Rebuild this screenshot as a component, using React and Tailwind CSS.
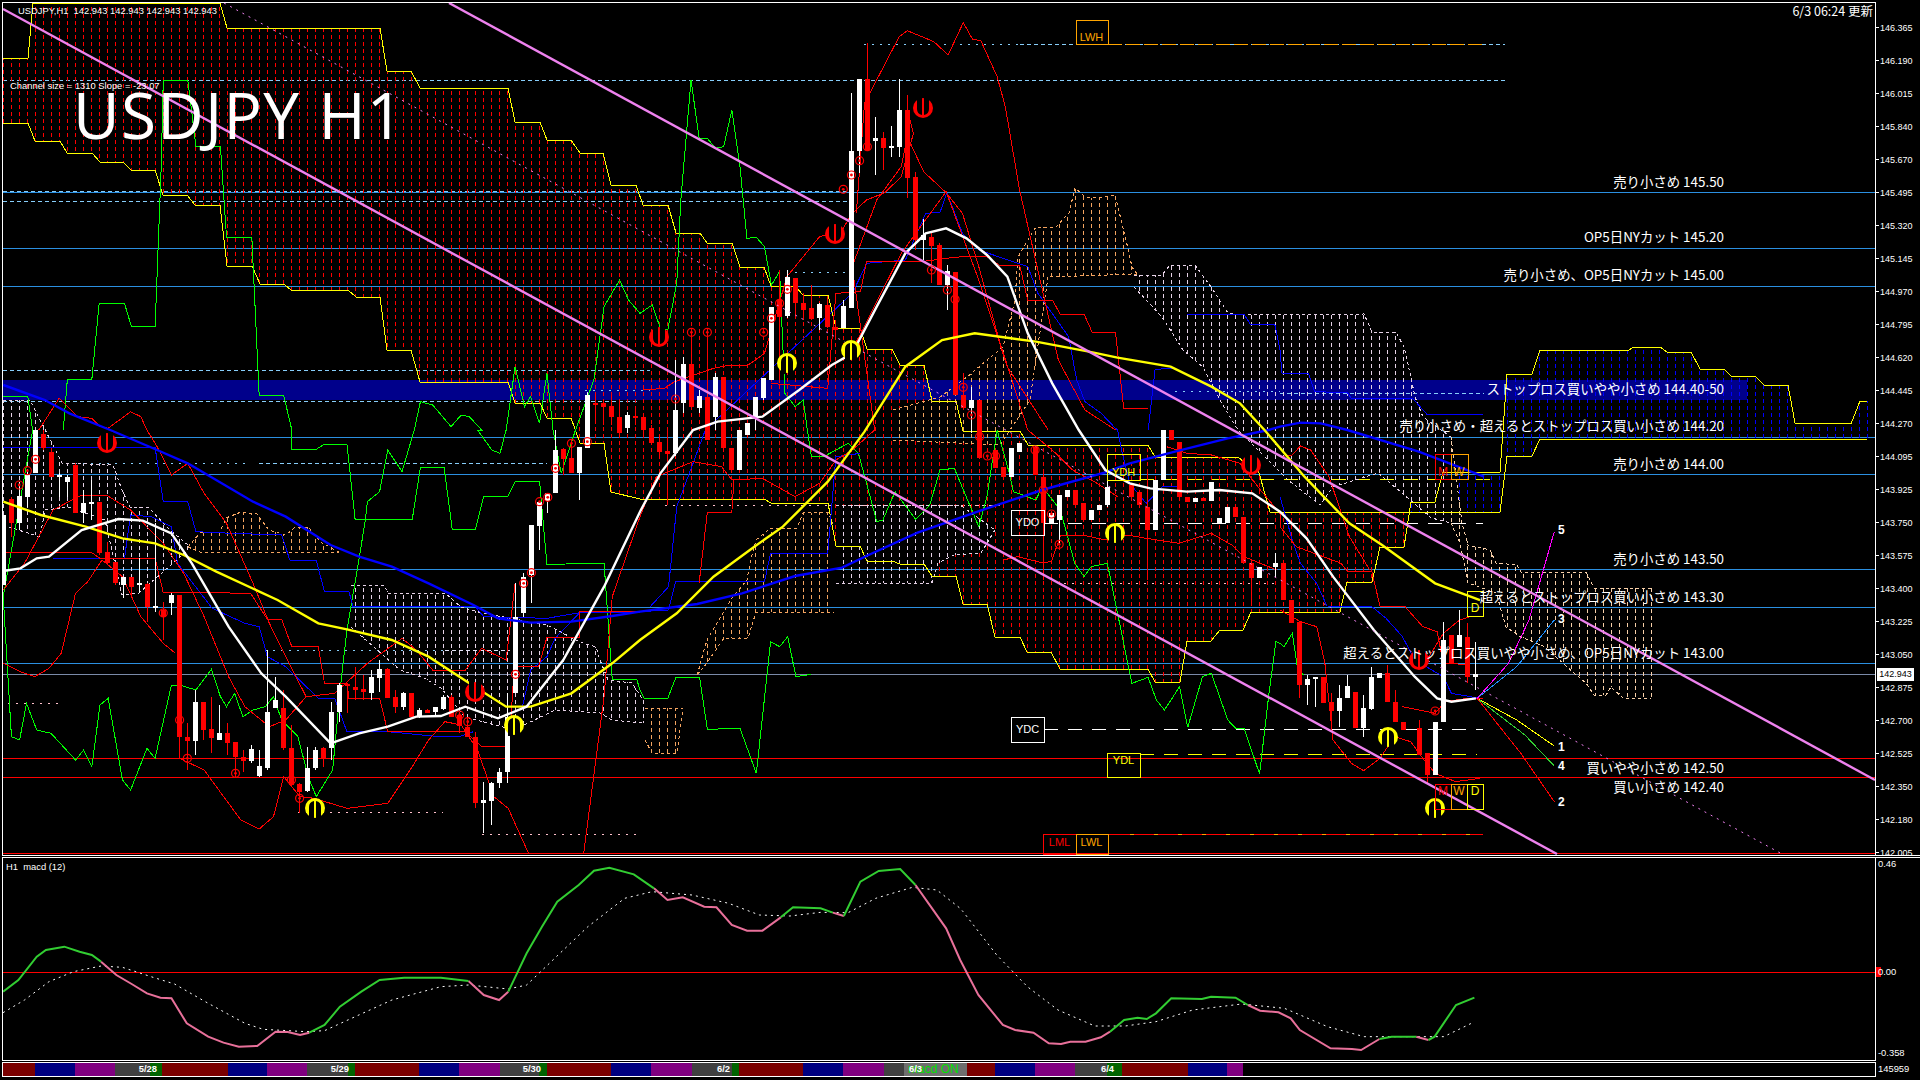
import React from "react";

// crop readings -> page pixels
const at = (ox, oy, sx, flat) => {
  const out = [];
  for (let i = 0; i < flat.length; i += 2) out.push([ox + flat[i] / sx, oy + flat[i + 1] / 3]);
  return out;
};
const a1 = (f) => at(0, 0, 2.45, f);
const a2 = (f) => at(1280, 0, 2.45, f);
const a3 = (f) => at(1280, 430, 2.45, f);
const a6 = (f) => at(640, 0, 2.45, f);
const a7 = (f) => at(640, 430, 2.45, f);
const a8 = (f) => at(0, 430, 2.45, f);
const m4 = (f) => at(0, 840, 1.633, f);
const m5 = (f) => at(960, 840, 1.633, f);
const pts = (list) => list.map((p) => p.join(",")).join(" ");

const interp = (poly, x) => {
  for (let i = 0; i < poly.length - 1; i++) {
    const [x0, y0] = poly[i];
    const [x1, y1] = poly[i + 1];
    if (x >= x0 && x <= x1) return x1 === x0 ? y0 : y0 + ((y1 - y0) * (x - x0)) / (x1 - x0);
  }
  return null;
};

const cloudTop = [[3,58],[28,58],[33,3],[220,3],[227,28],[380,28],[387,71],[411,71],[420,88],[508,88],[515,122],[540,122],[547,140],[571,140],[580,153],[603,153],[611,185],[636,185],[643,205],[668,205],[676,233],[700,233],[707,243],[732,243],[740,267],[764,267],[771,286],[795,286],[803,295],[828,295],[836,328],[860,328],[867,349],[892,349],[900,365],[924,365],[932,401],[956,401],[963,431],[1020,431],[1028,445],[1148,445],[1155,457],[1238,457],[1244,462],[1256,462],[1270,512],[1500,512],[1507,456],[1532,456],[1540,439],[1867,439]];
const cloudBottom = [[3,123],[28,123],[35,141],[60,141],[67,153],[92,153],[100,162],[123,162],[131,170],[155,170],[163,195],[187,195],[195,205],[220,205],[227,266],[252,266],[260,284],[284,284],[291,290],[348,290],[356,297],[380,297],[387,350],[411,350],[420,382],[508,382],[515,403],[540,403],[547,418],[571,418],[580,443],[604,443],[611,492],[640,499],[764,499],[771,503],[828,503],[836,546],[860,546],[867,561],[892,561],[900,564],[924,564],[932,576],[956,576],[963,604],[987,604],[995,637],[1020,637],[1027,652],[1051,652],[1060,669],[1148,669],[1155,682],[1180,682],[1187,641],[1211,641],[1220,630],[1243,630],[1251,612],[1340,612],[1347,582],[1372,582],[1380,547],[1404,547],[1411,502],[1435,502],[1443,472],[1500,472],[1507,374],[1532,374],[1540,350],[1629,350],[1634,347],[1660,347],[1667,352],[1691,352],[1700,369],[1724,369],[1731,376],[1755,376],[1764,385],[1788,385],[1795,423],[1824,423],[1851,424],[1860,401],[1867,401]];

// top edge, bottom edge, colour of every hatched stretch of the cloud
const hatches = [
  { top: cloudTop.filter((p) => p[0] <= 1500), bottom: cloudBottom.filter((p) => p[0] <= 1500), color: "#ff0000" },
  { top: [[1411,502],[1435,502],[1443,472],[1500,472]], bottom: [[1411,512],[1500,512]], color: "#0000ff" },
  { top: [[1507,374],[1532,374],[1540,350],[1629,350],[1634,347],[1660,347],[1667,352],[1691,352],[1700,369],[1724,369],[1731,376],[1755,376],[1764,385],[1788,385],[1795,423],[1824,423],[1851,424],[1860,401],[1867,401]], bottom: [[1507,456],[1532,456],[1540,439],[1867,439]], color: "#0000ff" },
  { top: [[3,400],[30,400],[62,463],[113,465],[122,490],[130,507],[148,507],[170,530],[188,545]], bottom: [[3,525],[40,537],[45,510],[68,507],[105,520],[122,595],[139,593],[188,550]], color: "#e6d2e6", edge: true },
  { top: [[188,547],[200,533],[220,532],[226,518],[241,512],[257,514],[269,530],[286,535],[294,528],[308,527],[322,543],[339,552]], bottom: [[188,547],[200,552],[339,552]], color: "#f4a460", edge: true },
  { top: [[351,585],[384,585],[388,593],[445,593],[461,607],[482,613],[547,625],[580,642],[596,647],[600,660],[608,680],[632,683],[643,700]], bottom: [[351,627],[400,670],[424,678],[441,688],[465,717],[514,730],[555,710],[600,713],[612,720],[643,723]], color: "#e6d2e6", edge: true },
  { top: [[645,708],[683,708]], bottom: [[645,740],[652,753],[677,753],[683,708]], color: "#f4a460", edge: true },
  { top: [[697,675],[707,640],[732,598],[747,580],[750,563],[756,540],[771,528],[797,528],[803,513],[828,512],[834,527]], bottom: [[697,675],[707,663],[724,638],[748,638],[756,612],[834,612]], color: "#f4a460", edge: true },
  { top: [[836,505],[960,505],[995,530]], bottom: [[836,583],[932,583],[938,563],[954,555],[981,553],[995,530]], color: "#e6d2e6", edge: true },
  { top: [[893,410],[940,397],[967,377],[987,360],[1003,347],[1015,300],[1018,257],[1032,233],[1036,227],[1056,227],[1069,213],[1075,188],[1085,197],[1097,198],[1105,197],[1115,195],[1126,240],[1132,267],[1138,275]], bottom: [[893,440],[1000,445],[1030,400],[1048,277],[1138,274]], color: "#f4a460", edge: true },
  { top: [[1134,275],[1162,275],[1170,265],[1195,265],[1211,287],[1228,313],[1244,315],[1364,314],[1372,332],[1396,332],[1404,347],[1410,373],[1415,397],[1423,417],[1451,437]], bottom: [[1134,287],[1162,317],[1183,350],[1203,367],[1220,400],[1238,430],[1288,480],[1320,505],[1333,487],[1378,473],[1402,493],[1431,518],[1451,523]], color: "#e6d2e6", edge: true },
  { top: [[1451,437],[1462,523],[1468,545],[1490,550],[1496,563],[1517,565],[1521,572],[1586,572],[1594,588],[1651,588]], bottom: [[1451,523],[1460,543],[1468,583],[1496,593],[1506,627],[1521,637],[1545,647],[1574,673],[1586,683],[1594,695],[1606,695],[1611,687],[1623,698],[1651,698]], color: "#f7cfa8", edge: true },
];

const hatchLines = [];
hatches.forEach((h, i) => {
  for (let x = 3; x < 1870; x += 8) {
    const t = interp(h.top, x);
    const b = interp(h.bottom, x);
    if (t !== null && b !== null && b > t) hatchLines.push({ key: `${i}-${x}`, x, t, b, color: h.color });
  }
});

const thin = [
  // green
  { c: "#00ff00", p: a1([155,1290,165,1138,225,1138,243,910,305,910,322,980,380,980,395,500,400,240,460,240,480,438,540,438,555,712,617,712,635,1186,695,1186,715,1290]).concat(a8([715,58,775,58,795,42,850,42,870,268,1010,268,1030,112,1088,112,1108,298,1165,298,1185,198,1245,198,1262,155,1322,155,1340,403,1480,400,1500,748,1560,748,1568,780]), a7([10,805,68,805,88,742,146,742,165,898,245,895,285,1030,320,635,342,650,362,620,382,740,420,733])) },
  { c: "#00ff00", p: a1([8,1190,68,1190,80,1290]).concat(a8([8,500,28,920,48,930,65,820,90,900,125,910,185,990,205,960,225,1010,245,825,265,805,300,1050,320,1080,360,955,380,985,420,765,440,765,480,780,518,718,540,800,555,830,575,790,595,860,620,840,650,830,670,800,690,870,730,920,755,1040,775,1100,815,1020,835,760,850,600,880,385,895,270,900,215,930,185,950,60,985,125,1015,0]), a1([1030,1205,1060,1215,1105,1280,1130,1245,1150,1250,1180,1290]), a8([1170,0,1205,60,1225,70,1240,0]), a1([1262,1100,1285,1220,1300,1190,1322,1270,1340,1120,1355,1290]), a8([1355,0,1375,130,1410,0]), a1([1455,1140,1480,920,1518,840,1540,900,1568,940]), a6([30,915,50,985,68,990,90,850,100,600,125,240,145,415,165,415,185,445,205,440,225,330,245,500,262,715,285,712,305,740,322,855,342,815,355,1180,380,1220,400,1200,410,1290]), a7([420,80,450,80,510,40,535,70,555,160,580,275,595,270,625,185,675,268,710,225,735,120,770,115,830,290,850,200,875,0,905,130,915,185,970,210,985,170,1030,240,1065,400,1088,440,1105,410,1145,400,1205,760,1245,742,1265,810,1285,840,1322,770,1342,892,1378,740,1400,730,1440,870,1460,895,1480,895,1518,1032,1540,800,1558,635,1568,640]), a3([10,650,30,610,45,730,60,733])) },
  // blue
  { c: "#0000ff", p: a8([8,52,380,52,400,215,460,215,480,305,570,310,690,315,710,390,775,392,795,485,855,485,865,530,1165,530,1185,560,1340,565,1420,548,1568,548]) },
  { c: "#0000ff", p: a8([130,385,245,385]) },
  { c: "#0000ff", p: a8([305,385,320,255,370,260,420,290,435,400,520,535,600,580,635,590,655,680,700,710,780,805,820,805,850,905,950,905,1060,918,1130,918,1160,905]) },
  { c: "#0000ff", p: a8([1280,830,1300,720,1340,680,1360,625,1420,548]) },
  { c: "#0000ff", p: a7([25,530,70,470,90,230,130,100,160,0]).concat(a6([520,880,540,830,555,790,650,780,700,640,735,637,752,578,790,700,830,750,950,800,975,880,1050,1010,1070,1140,1090,1205,1130,1240,1165,1285]), a7([1170,0,1180,60,1200,160,1240,220,1280,170,1320,170])) },
  { c: "#0000ff", p: a7([0,545,70,540,87,455,305,455,320,370,460,370,480,80,540,70]) },
  { c: "#0000ff", p: a6([1245,1290,1262,1108,1305,1105]) },
  { c: "#0000ff", p: a6([1340,945,1480,943,1495,972,1555,972,1568,1050]).concat(a2([5,1120,70,1122,85,1175,165,1178,175,1195,325,1195,360,1243,497,1243])) },
  { c: "#0000ff", p: a3([0,200,30,330,50,400,90,460,115,528,225,530,260,565,300,620,330,690,400,740,420,790,490,805]) },
  // red
  { c: "#ff0000", p: a1([95,1290,145,1195,190,1250,225,1255,245,1280,265,1285,320,1235,345,1250,360,1290]).concat(a8([385,50,420,135,460,100,500,190,555,280,620,460,660,580,700,680,750,800])) },
  { c: "#ff0000", p: a8([8,700,50,725,85,740,120,715,150,670,185,490,215,455,250,390,300,440,345,560,400,640,430,670]) },
  { c: "#ff0000", p: a8([8,480,60,400,130,240,200,195,260,195,320,240,400,340,450,430,500,560,560,740,600,830,660,890,700,870,750,800,820,790,900,700,985,625,1020,660,1060,720,1140,720,1180,655,1240,690,1262,460]) },
  { c: "#ff0000", p: a8([440,985,500,1020,590,1170,635,1197,670,1160,695,1040,735,1100,770,1105,850,1135,950,1120,1010,1010,1050,930,1090,875,1130,885,1170,960,1210,1100,1245,1135,1295,1270]) },
  { c: "#ff0000", p: a8([1430,1270,1480,800,1500,500,1568,260]).concat(a7([40,140,130,95,200,110,225,150,300,145,380,200,440,160,480,90,520,60,575,0]), a6([520,800,580,600,640,500,655,410,695,515,750,578,790,640,830,800,880,1020,950,1290]), a7([950,0,1010,60,1060,120,1120,160,1170,200])) },
  { c: "#ff0000", p: a8([8,368,225,368,245,385,380,385,400,488,545,488,615,492,655,568,690,568,715,650,780,650,795,760,850,760,855,805,930,805,950,905,1140,905,1180,950,1240,950,1245,1000,1260,708,1320,708,1340,622,1420,622,1420,545,1560,545]) },
  { c: "#ff0000", p: a6([8,1170,60,1165,85,1145,180,1105,220,1095,265,1095,305,1060,360,830,440,710,475,700]) },
  { c: "#ff0000", p: a6([480,720,520,640,555,600,600,578,640,530,670,400,655,330]) },
  { c: "#ff0000", p: a6([530,640,550,310,635,110,655,92,720,125,755,165,792,68,815,118,835,122,875,230,895,320,930,570,1010,1000,1025,1080,1090,1230,1165,1290]) },
  { c: "#ff0000", p: a6([320,1150,460,1165,480,880,540,875,555,785,690,785,750,775,790,770,850,770,880,795,930,795,950,900,1010,900,1030,943,1088,943,1108,997,1165,997,1185,1225,1245,1225]) },
  { c: "#ff0000", p: a6([520,1050,640,760,750,575,830,840,900,1100,1000,1290]) },
  { c: "#ff0000", p: a7([145,458,165,247,225,247,230,150]) },
  { c: "#ff0000", p: a7([890,390,925,380,985,398,1008,395,1030,318,1085,315,1140,330,1195,315,1240,325,1320,340,1400,310,1450,345,1480,380,1560,420]) },
  { c: "#ff0000", p: a7([1290,50,1340,70,1400,75,1470,100,1520,180,1568,250]).concat(a3([0,290,40,350,150,400,165,425,225,425,245,528,305,528,350,590,385,605,400,700,455,703])) },
  { c: "#ff0000", p: a3([0,80,30,75,50,48,75,60,120,140,170,320,220,420]) },
  { c: "#ff0000", p: a3([0,540,50,575,90,590,110,700,130,930,175,1000,205,1022,245,985,280,920,320,935,350,985,380,1030,430,1055,490,1045]) },
  { c: "#ff0000", p: a3([360,690,400,610,440,570,465,560]) },
  { c: "#ff0000", p: a3([300,830,380,850,405,815,460,805,497,805]) },
  // forecast waves
  { c: "#ffff00", p: a3([483,805,580,870,672,948]) },
  { c: "#32cd32", p: a3([483,805,600,915,672,1008]) },
  { c: "#ff0000", p: a3([483,805,590,970,672,1115]) },
  { c: "#1e90ff", p: a3([483,805,580,710,672,570]) },
  { c: "#ff00ff", p: a3([483,805,560,700,610,570,672,305]) },
];

const thick = [
  { c: "#0000ff", p: a1([8,1155,110,1200,170,1240,270,1290]).concat(a8([385,60,460,100,620,215,700,260,810,345,880,380,960,410,1050,460,1160,525,1220,565,1300,578,1400,575,1500,558,1568,545]), a7([140,522,250,490,380,438,495,413,560,375,680,308,850,235,985,180,1140,127,1200,100,1320,62,1440,25,1540,0]), a2([0,1280,50,1268,100,1270,165,1290]), a3([340,65,500,140])) },
  { c: "#ffff00", p: a8([8,215,100,255,210,290,300,325,380,340,450,375,530,425,680,510,780,580,850,598,960,630,1050,680,1150,760,1240,830,1300,830,1400,790,1500,700,1568,630]).concat(a7([90,550,180,440,280,350,350,290,460,155,550,5]), a6([650,1100,740,1020,820,1000,970,1025,1100,1055,1170,1073,1300,1100,1400,1160,1470,1210,1530,1290]), a3([60,140,170,280,250,345,380,460,490,510])) },
  { c: "#ffffff", p: a8([8,423,50,415,90,385,120,380,200,300,290,267,350,272,420,310,470,400,560,590,640,730,700,800,810,940,880,910,950,890,1020,860,1080,858,1140,830,1220,865,1290,830,1380,690,1480,470,1568,245]).concat(a7([50,130,130,0]), a6([190,1265,300,1250,390,1170,470,1095,520,1060,580,920,650,760,700,700,750,685,800,715,850,765,900,830,950,1000,1010,1150,1075,1290]), a7([1140,120,1200,160,1250,175,1340,185,1420,180,1500,190,1568,245]), a3([65,325,130,440,230,600,330,740,385,805,420,815,480,805])) },
];

// [crop x, wick top, wick bottom, body top, body bottom, colour] in crop units
const c8 = [[8,255,465,255,465,"w"],[28,200,320,208,280,"r"],[48,155,300,198,278,"w"],[67,125,230,135,200,"w"],[87,0,130,0,128,"w"],[107,0,60,12,55,"r"],[126,55,140,65,140,"r"],[146,130,200,135,140,"w"],[165,135,200,140,155,"w"],[185,100,250,105,250,"r"],[205,180,280,220,250,"w"],[224,150,270,215,222,"w"],[244,215,375,215,370,"r"],[263,335,405,365,400,"r"],[283,395,465,395,460,"r"],[303,440,505,440,465,"w"],[322,440,500,440,470,"r"],[342,385,490,458,462,"w"],[361,460,575,462,530,"r"],[381,280,545,528,533,"w"],[400,515,630,540,560,"r"],[420,490,555,495,520,"w"],[440,495,985,495,920,"r"],[459,880,1020,920,932,"r"],[479,780,975,815,932,"w"],[498,815,930,815,900,"r"],[518,800,970,897,925,"r"],[538,825,930,910,930,"w"],[557,880,975,910,940,"r"],[577,935,1040,935,980,"r"],[596,960,1025,980,992,"r"],[616,945,1000,957,992,"w"],[635,960,1040,1008,1037,"w"],[655,660,1020,845,1015,"w"],[675,740,830,810,835,"w"],[694,780,960,835,955,"r"],[714,885,1070,955,1065,"r"],[733,1060,1150,1062,1085,"r"],[753,950,1085,1015,1082,"w"],[772,950,1020,960,1015,"w"],[792,950,1010,955,985,"r"],[812,815,990,845,955,"w"],[832,760,875,765,845,"w"],[851,760,850,762,765,"r"],[871,710,810,770,780,"r"],[890,735,810,778,785,"r"],[910,720,810,740,790,"w"],[930,690,785,718,745,"w"],[950,715,805,718,805,"r"],[969,780,850,802,830,"r"],[989,785,840,790,830,"w"],[1008,790,860,790,860,"r"],[1028,835,865,840,860,"w"],[1048,838,850,840,848,"r"],[1067,830,855,832,845,"w"],[1087,795,840,800,838,"w"],[1106,795,860,800,860,"r"],[1126,845,910,855,888,"r"],[1146,865,920,890,920,"r"],[1165,905,1135,920,1118,"r"],[1185,1055,1210,1110,1118,"w"],[1204,1055,1185,1058,1112,"w"],[1224,1015,1075,1025,1058,"w"],[1243,790,1060,860,1025,"w"],[1263,460,790,560,790,"w"],[1283,430,560,440,550,"w"],[1302,285,520,285,435,"w"],[1322,215,360,215,288,"w"],[1342,190,250,190,212,"w"],[1361,0,190,60,188,"w"],[1381,55,135,58,88,"r"],[1400,30,130,85,130,"r"],[1420,50,210,52,128,"w"]];
const c6 = [[68,1290,1515,1353,1362,"r"],[87,1080,1368,1230,1359,"w"],[107,1070,1240,1092,1210,"w"],[126,1000,1225,1092,1222,"r"],[146,1170,1240,1188,1225,"w"],[165,1000,1320,1190,1320,"r"],[185,1120,1290,1132,1250,"w"],[205,1130,1345,1132,1345,"r"],[224,1345,1410,1345,1410,"r"],[244,1290,1410,1290,1410,"w"],[263,1270,1305,1270,1305,"w"],[283,1190,1290,1190,1250,"w"],[303,1135,1200,1135,1195,"w"],[322,920,1140,920,1140,"w"],[342,810,1150,900,950,"r"],[361,810,955,830,948,"w"],[381,835,950,835,910,"r"],[400,880,960,910,930,"r"],[420,855,960,925,957,"r"],[440,910,990,912,955,"w"],[459,890,985,915,980,"r"],[479,960,1020,980,990,"r"],[498,900,985,918,985,"w"],[518,280,925,453,925,"w"],[538,280,520,238,452,"w"],[557,130,450,238,450,"r"],[577,350,525,413,423,"w"],[596,395,510,413,443,"r"],[616,378,470,437,443,"w"],[635,238,470,330,440,"w"],[655,285,595,330,533,"r"],[675,515,750,532,720,"r"],[694,658,780,705,720,"w"],[714,700,850,710,738,"r"],[733,730,855,735,855,"r"],[753,795,930,813,855,"w"],[772,815,1185,815,1185,"r"],[792,1120,1230,1185,1225,"r"],[812,1160,1300,1200,1225,"w"],[832,1200,1375,1200,1375,"r"]];
const c7 = [[871,60,115,60,115,"r"],[890,110,140,110,140,"r"],[910,55,140,55,140,"w"],[930,40,65,40,65,"w"],[969,50,135,50,135,"r"],[989,130,450,140,280,"r"],[1008,250,280,250,280,"w"],[1028,195,340,195,270,"w"],[1048,180,200,180,200,"w"],[1067,180,225,180,225,"r"],[1087,220,270,220,270,"r"],[1106,240,270,240,270,"w"],[1126,225,240,225,240,"w"],[1146,150,230,170,225,"w"],[1204,165,200,165,200,"r"],[1224,185,225,185,225,"r"],[1243,120,450,230,300,"r"],[1263,150,300,150,300,"w"],[1283,0,150,0,150,"w"],[1302,0,30,0,30,"r"],[1322,35,200,35,200,"r"],[1342,200,215,200,215,"r"],[1361,205,215,205,215,"w"],[1381,205,212,205,212,"r"],[1400,155,212,155,212,"w"],[1420,265,278,265,278,"w"],[1439,230,278,230,278,"w"],[1459,230,260,230,260,"r"],[1478,260,400,260,400,"r"],[1498,400,520,400,445,"r"],[1518,410,445,410,445,"w"],[1557,370,440,398,412,"w"]];
const c3 = [[8,400,510,400,510,"r"],[28,510,580,510,580,"r"],[48,575,805,575,765,"r"],[67,735,825,748,765,"w"],[87,740,830,742,748,"w"],[107,740,820,740,820,"r"],[126,790,895,815,842,"r"],[146,765,890,805,842,"w"],[165,735,805,768,805,"w"],[185,785,895,785,895,"r"],[205,795,920,835,895,"w"],[224,710,840,742,838,"w"],[244,730,745,730,745,"w"],[263,705,815,730,815,"r"],[283,780,875,815,875,"r"],[303,875,900,875,900,"r"],[342,870,975,895,975,"r"],[361,975,1060,970,1035,"r"],[381,875,1035,875,1035,"w"],[401,575,875,630,875,"w"],[420,615,700,615,700,"r"],[440,540,650,615,650,"w"],[459,580,760,620,740,"r"],[479,635,780,733,740,"w"]];
// page pixels, read off directly
const cPage = [[587,392,448,395,448,"w"],[595,395,420,403,405,"r"],[603,400,425,403,407,"r"],[611,396,425,406,417,"r"],[619,400,435,417,433,"r"],[627,412,433,415,428,"w"],[635,410,425,416,418,"r"],[643,413,435,417,430,"r"],[651,425,445,428,443,"r"],[659,438,456,442,452,"r"]];

const toCandles = (list, ox, oy) =>
  list.map(([x, wt, wb, bt, bb, col]) => ({
    x: Math.round((ox + x / 2.45 - 3) / 8) * 8 + 3,
    wt: oy + wt / 3,
    wb: oy + wb / 3,
    bt: oy + bt / 3,
    bb: oy + bb / 3,
    col: col === "r" ? "#ff0000" : "#ffffff",
  }));
const candles = [
  ...toCandles(c8, 0, 430),
  ...cPage.map(([x, wt, wb, bt, bb, col]) => ({ x, wt, wb, bt, bb, col: col === "r" ? "#ff0000" : "#ffffff" })),
  ...toCandles(c6, 640, 0),
  ...toCandles(c7, 640, 430),
  ...toCandles(c3, 1280, 430),
];

const rings = [
  ...a8([47,165,67,122,87,88,400,549,440,870,459,985,577,1030,714,1050,734,1105,1126,855,1146,875,1263,733,1283,460,1302,428,1322,215,1342,202,1361,115,1400,40,1439,35]),
  ...a6([87,1197,126,997,165,997,303,997,322,955,342,910,361,868,498,568,518,525,538,482,557,440,714,810,753,870,772,898,792,1162,812,1245]),
  ...a7([832,20,851,78,871,78,968,60,988,180,1008,252,1027,343]),
  ...a3([380,843]),
];
const yellowMarks = [[315,808],[514,725],[787,363],[851,350],[1115,533],[1388,737],[1435,808]];
const redMarks = [[107,443],[475,692],[659,337],[835,234],[923,108],[1251,465],[1419,660]];

// [y, x from, x to, colour, dash]
const hLines = [
  [192,3,1875,"#2b8fe0"],[248,3,1875,"#2b8fe0"],[286,3,1875,"#2b8fe0"],[437,3,1875,"#2b8fe0"],[474,3,1875,"#2b8fe0"],[569,3,1875,"#2b8fe0"],[607,3,1875,"#2b8fe0"],[663,3,1875,"#2b8fe0"],
  [674,3,1875,"#7a8aa8"],[758,3,1875,"#ff0000"],[777,3,1875,"#ff0000"],[853,3,1875,"#ff0000"],
  [80,3,1506,"#87cefa","4 3"],[44,864,1020,"#87cefa","2 6"],[44,1020,1505,"#87cefa","4 3"],[44,1108,1484,"#ffa500","14 4"],
  [191,3,848,"#87cefa","4 3"],[201,3,848,"#87cefa","4 3"],[370,3,650,"#87cefa","4 3"],[401,3,640,"#87cefa","4 3"],
  [272,795,848,"#87cefa","2 6"],[391,1175,1280,"#87cefa","2 6"],[393,1280,1484,"#87cefa","4 3"],[390,585,650,"#87cefa","2 6"],
  [463,75,250,"#87cefa","2 6"],[463,259,547,"#87cefa","4 3"],[650,265,445,"#87cefa","2 6"],[650,445,510,"#e6e6fa","4 3"],
  [703,8,60,"#ffc0cb","2 6"],[812,298,443,"#ffc0cb","2 6"],[834,482,637,"#ffc0cb","2 6"],[505,665,828,"#ffc0cb","2 6"],[505,828,1000,"#ffc0cb","4 3"],[583,1064,1280,"#ffc0cb","2 6"],
  [479,1140,1500,"#ffff00","14 10"],[522.5,1044,1483,"#ffffff","14 10"],[729,1044,1483,"#ffffff","14 10"],[753.5,1140,1477,"#ffff00","14 10"],
  [834,1108,1483,"#ff0000"],[834,1130,1483,"#ffa500","4 20"],
];

// [x, y, w, h, colour] of the level boxes
const boxes = [
  [1075.5,20,32.5,24,"#ffa500"],[1107,454,33,26,"#ffff00"],[1011,510,33,25,"#ffffff"],[1011,717,33,25,"#ffffff"],[1107,753,33,24,"#ffff00"],
  [1043,834,32.5,20,"#ff0000"],[1075.5,834,32.5,20,"#ffa500"],[1435,454,16,25,"#ff0000"],[1451,454,17,25,"#ffa500"],[1467,591,16,25,"#ffff00"],
  [1435,784,16,25,"#ff0000"],[1451,784,16,25,"#ffa500"],[1467,784,16,25,"#ffff00"],
];

const Mark = ({ x, y, color, up }) => (
  <g transform={`translate(${x} ${y}) scale(1 ${up ? 1 : -1})`}>
    <circle r="10" fill={color} />
    <path d="M-6 11 V-1 Q-6 -6 -1 -7 V3 L-1 11 Z M6 11 V-1 Q6 -6 1 -7 V3 L1 11 Z" fill="#000" />
  </g>
);

const prices = ["146.365","146.190","146.015","145.840","145.670","145.495","145.320","145.145","144.970","144.795","144.620","144.445","144.270","144.095","143.925","143.750","143.575","143.400","143.225","143.050","142.875","142.700","142.525","142.350","142.180","142.005"];

const macdGreen = [
  m4([5,455,30,420,60,350,75,330,105,320,130,335,150,345,165,365]),
  m4([505,578,530,555,555,500,590,455,620,420,660,413,720,413,765,423]),
  m4([830,455,860,340,885,260,910,185,945,135,970,92,995,83,1035,103,1068,145]),
  m4([1275,232,1295,202,1340,205,1360,218]),
  m4([1378,228,1405,125,1435,93,1470,87,1495,135]),
  m5([245,575,268,540,290,533,305,537,320,520,345,475,395,477,410,470,450,473,470,495]),
  m5([685,597,705,590,745,590]),
  m5([765,600,775,590,810,495,840,473]),
];
const macdPink = [
  m4([165,365,190,405,215,432,240,460,262,473,280,475,305,550,340,590,365,608,390,620,420,618,450,575,470,576,490,585,505,578]),
  m4([765,423,790,465,815,480,830,455]),
  m4([1068,145,1090,180,1115,172,1150,200,1170,202,1195,255,1220,272,1245,272,1275,232]),
  m4([1360,218,1378,228]),
  m4([1495,135,1520,200,1545,265,1568,360]).concat(m5([30,465,70,555,90,570,120,578,145,610,165,612,180,605,205,605,230,592,245,575])),
  m5([470,495,490,512,520,517,540,535,555,570,605,625,640,627,655,630,685,597]),
  m5([745,590,765,600]),
];
const macdSignal = m4([5,518,40,480,80,425,120,395,165,378,200,382,250,412,285,432,340,490,400,550,430,568,500,575,530,572,580,530,640,480,720,440,765,435,830,447,860,435,900,365,960,260,1020,175,1065,155,1130,165,1190,190,1240,225,1290,228,1340,217,1385,218,1430,175,1490,142,1530,150,1568,205]).concat(m5([5,215,60,345,110,440,160,510,220,558,270,558,320,545,380,510,460,492,530,505,600,560,660,590,740,590,790,590,835,550]));

const sans = "font-['Noto_Sans_CJK_JP','Liberation_Sans',sans-serif]";
const lib = "font-['Liberation_Sans',sans-serif]";
const small = `${lib} text-[9.4px] leading-[12px]`;
const note = `absolute right-[151px] whitespace-nowrap text-white text-[13.4px] leading-[14px] ${sans}`;
const wave = `absolute left-[1555px] text-white font-bold text-[12px] leading-[14px] ${lib}`;
const tag = `absolute w-[33px] text-center text-[11px] leading-[14px] ${lib}`;
const letter = `absolute w-[16px] text-center text-[12px] leading-[14px] ${lib}`;

const Segment = ({ className, label }) => (
  <div className={`relative h-full ${className}`}>
    {label}
  </div>
);

const DateTag = ({ className, children }) => (
  <span className={`absolute top-0 z-10 text-white font-bold ${small} ${className}`}>{children}</span>
);

export default function App() {
  return (
    <div className="w-[1920px] h-[1080px] bg-black overflow-hidden pt-[2px] pl-[2px]">
      {/* price chart + axis */}
      <div className="flex h-[854px] border-b border-white">
        <div className="relative w-[1874px] border-l border-t border-r border-white overflow-hidden">
          <svg viewBox="3 3 1872 852" className="absolute left-0 top-0 w-[1872px] h-[852px]" shapeRendering="crispEdges" fill="none">
            <rect x="3" y="380" width="1744" height="19.5" fill="#00008b" />
            {hLines.map(([y, x0, x1, c, d], i) => (
              <line key={i} x1={x0} x2={x1} y1={y + 0.5} y2={y + 0.5} stroke={c} strokeDasharray={d} />
            ))}
            {hatchLines.map((h) => (
              <line key={h.key} x1={h.x + 0.5} x2={h.x + 0.5} y1={h.t} y2={h.b} stroke={h.color} strokeDasharray="4 3" strokeDashoffset={h.t % 7} />
            ))}
            {hatches.filter((h) => h.edge).map((h, i) => (
              <g key={i} stroke={h.color} strokeDasharray="3 3">
                <polyline points={pts(h.top)} />
                <polyline points={pts(h.bottom)} />
              </g>
            ))}
            <polyline points={pts(cloudTop)} stroke="#ffff00" />
            <polyline points={pts(cloudBottom)} stroke="#ffff00" />
            {thin.map((l, i) => (
              <polyline key={i} points={pts(l.p)} stroke={l.c} />
            ))}
            {candles.map((c, i) => (
              <g key={i}>
                <rect x={c.x} y={c.wt} width="1" height={Math.max(c.wb - c.wt, 1)} fill={c.col} />
                <rect x={c.x - 2} y={c.bt} width="5" height={Math.max(c.bb - c.bt, 2)} fill={c.col} />
              </g>
            ))}
            <g shapeRendering="auto">
              {thick.map((l, i) => (
                <polyline key={i} points={pts(l.p)} stroke={l.c} strokeWidth="2.4" />
              ))}
              <line x1="3" y1="9" x2="1557" y2="854" stroke="#ee82ee" strokeWidth="2.4" />
              <line x1="449" y1="3" x2="1875" y2="780" stroke="#ee82ee" strokeWidth="2.4" />
              <line x1="224" y1="3" x2="1782" y2="854" stroke="#ee82ee" strokeDasharray="2 5" />
              {rings.map(([x, y], i) => (
                <g key={i}>
                  <circle cx={x} cy={y} r="4" stroke="#ff0000" strokeWidth="1.2" />
                  <circle cx={x} cy={y} r="1.4" fill="#ff0000" />
                </g>
              ))}
              {yellowMarks.map(([x, y], i) => (
                <Mark key={i} x={x} y={y} color="#ffff00" up />
              ))}
              {redMarks.map(([x, y], i) => (
                <Mark key={i} x={x} y={y} color="#ff0000" />
              ))}
            </g>
            {boxes.map(([x, y, w, h, c], i) => (
              <rect key={i} x={x + 0.5} y={y + 0.5} width={w} height={h} stroke={c} />
            ))}
          </svg>

          <span className={`absolute left-[15px] top-[2px] whitespace-pre text-white ${small}`}>USDJPY,H1  142.943 142.943 142.943 142.943</span>
          <span className={`absolute left-[7px] top-[77px] whitespace-nowrap text-white ${small}`}>Channel size = 1310 Slope = -23.07</span>
          <span className="absolute left-[70px] top-[90px] whitespace-nowrap text-white text-[64px] tracking-[1.3px] leading-[44px] font-['Open_Sans',sans-serif]">USDJPY H1</span>
          <span className={`absolute right-[2px] top-[1px] whitespace-nowrap text-white text-[12.5px] leading-[14px] ${sans}`}>6/3 06:24 更新</span>

          <span className={`${note} top-[171px]`}>売り小さめ 145.50</span>
          <span className={`${note} top-[226px]`}>OP5日NYカット 145.20</span>
          <span className={`${note} top-[264px]`}>売り小さめ、OP5日NYカット 145.00</span>
          <span className={`${note} top-[378px]`}>ストップロス買いやや小さめ 144.40-50</span>
          <span className={`${note} top-[415px]`}>売り小さめ・超えるとストップロス買い小さめ 144.20</span>
          <span className={`${note} top-[453px]`}>売り小さめ 144.00</span>
          <span className={`${note} top-[548px]`}>売り小さめ 143.50</span>
          <span className={`${note} top-[586px]`}>超えるとストップロス買い小さめ 143.30</span>
          <span className={`${note} top-[642px]`}>超えるとストップロス買いやや小さめ、OP5日NYカット 143.00</span>
          <span className={`${note} top-[757px]`}>買いやや小さめ 142.50</span>
          <span className={`${note} top-[776px]`}>買い小さめ 142.40</span>

          <span className={`${wave} top-[520px]`}>5</span>
          <span className={`${wave} top-[609px]`}>3</span>
          <span className={`${wave} top-[737px]`}>1</span>
          <span className={`${wave} top-[756px]`}>4</span>
          <span className={`${wave} top-[792px]`}>2</span>

          <span className={`${tag} left-[1072px] top-[27px] text-[#ffa500]`}>LWH</span>
          <span className={`${tag} left-[1104px] top-[462px] text-[#ffff00]`}>YDH</span>
          <span className={`${tag} left-[1008px] top-[512px] text-white`}>YDO</span>
          <span className={`${tag} left-[1008px] top-[719px] text-white`}>YDC</span>
          <span className={`${tag} left-[1104px] top-[750px] text-[#ffff00]`}>YDL</span>
          <span className={`${tag} left-[1040px] top-[832px] text-[#ff0000]`}>LML</span>
          <span className={`${tag} left-[1072px] top-[832px] text-[#ffa500]`}>LWL</span>
          <span className={`${letter} left-[1432px] top-[462px] text-[#ff0000]`}>M</span>
          <span className={`${letter} left-[1448px] top-[462px] text-[#ffa500]`}>W</span>
          <span className={`${letter} left-[1464px] top-[598px] text-[#ffff00]`}>D</span>
          <span className={`${letter} left-[1432px] top-[781px] text-[#ff0000]`}>M</span>
          <span className={`${letter} left-[1448px] top-[781px] text-[#ffa500]`}>W</span>
          <span className={`${letter} left-[1464px] top-[781px] text-[#ffff00]`}>D</span>
        </div>

        <div className="relative flex-1 h-[853px] flex flex-col pt-[9px]">
          {prices.map((p) => (
            <div key={p} className={`h-[33px] shrink-0 flex items-center text-white text-[9px] ${lib}`}>
              <span className="w-[3px] h-px bg-white" />
              <span className="pl-[1px] leading-[12px]">{p}</span>
            </div>
          ))}
          <span className={`absolute left-[1px] top-[666px] w-[37px] h-[13px] bg-white text-black text-center text-[9px] leading-[13px] ${lib}`}>142.943</span>
        </div>
      </div>

      {/* macd */}
      <div className="flex h-[204px] border-t border-white mt-px">
        <div className="relative w-[1874px] border-l border-r border-b border-white overflow-hidden">
          <svg viewBox="3 858 1872 202" className="absolute left-0 top-0 w-[1872px] h-[202px]" fill="none">
            <line x1="3" x2="1875" y1="972.5" y2="972.5" stroke="#ff0000" shapeRendering="crispEdges" />
            <polyline points={pts(macdSignal)} stroke="#ffffff" strokeDasharray="2 4" />
            {macdPink.map((p, i) => (
              <polyline key={i} points={pts(p)} stroke="#e8709a" strokeWidth="2" />
            ))}
            {macdGreen.map((p, i) => (
              <polyline key={i} points={pts(p)} stroke="#32cd32" strokeWidth="2" />
            ))}
          </svg>
          <span className={`absolute left-[3px] top-[3px] whitespace-pre text-white ${small}`}>H1  macd (12)</span>
        </div>
        <div className={`flex-1 flex flex-col text-white pl-[2px] ${small}`}>
          <span>0.46</span>
          <span className="relative mt-[96px]">
            <span className="absolute left-[-2px] top-[1px] w-[5px] h-[10px] bg-[#ff0000]" />
            <span className="relative">0.00</span>
          </span>
          <span className="mt-[69px]">-0.358</span>
        </div>
      </div>

      {/* time strip */}
      <div className="flex h-[15px] mt-px">
        <div className="flex w-[1874px] border-l border-t border-r border-b border-white">
          <Segment className="w-[32px] bg-[#7a0000]" />
          <Segment className="w-[40px] bg-[#000080]" />
          <Segment className="w-[40px] bg-[#800080]" />
          <Segment className="w-[35px] bg-[#404040]" label={<DateTag className="right-[-7px]">5/28</DateTag>} />
          <Segment className="w-[12px] bg-[#006400]" />
          <Segment className="w-[66px] bg-[#7a0000]" />
          <Segment className="w-[39px] bg-[#000080]" />
          <Segment className="w-[40px] bg-[#800080]" />
          <Segment className="w-[41px] bg-[#404040]" label={<DateTag className="right-[-1px]">5/29</DateTag>} />
          <Segment className="w-[7px] bg-[#006400]" />
          <Segment className="w-[64px] bg-[#7a0000]" />
          <Segment className="w-[40px] bg-[#000080]" />
          <Segment className="w-[41px] bg-[#800080]" />
          <Segment className="w-[39px] bg-[#404040]" label={<DateTag className="right-[-2px]">5/30</DateTag>} />
          <Segment className="w-[8px] bg-[#006400]" />
          <Segment className="w-[64px] bg-[#7a0000]" />
          <Segment className="w-[40px] bg-[#000080]" />
          <Segment className="w-[41px] bg-[#800080]" />
          <Segment className="w-[40px] bg-[#404040]" label={<DateTag className="right-[2px]">6/2</DateTag>} />
          <Segment className="w-[7px] bg-[#006400]" />
          <Segment className="w-[64px] bg-[#7a0000]" />
          <Segment className="w-[40px] bg-[#000080]" />
          <Segment className="w-[41px] bg-[#800080]" />
          <Segment className="w-[20px] bg-[#404040]" />
          <div className="relative w-[63px] h-full bg-[#6e6e6e]">
            <span className={`absolute left-[4px] top-0 text-[#00e000] text-[12px] leading-[13px] whitespace-nowrap ${lib}`}>macd ON</span>
            <span className={`absolute left-[5px] top-0 text-white font-bold ${small}`}>6/3</span>
          </div>
          <Segment className="w-[28px] bg-[#7a0000]" />
          <Segment className="w-[40px] bg-[#000080]" />
          <Segment className="w-[40px] bg-[#800080]" />
          <Segment className="w-[32px] bg-[#404040]" label={<DateTag className="right-[-7px]">6/4</DateTag>} />
          <Segment className="w-[15px] bg-[#006400]" />
          <Segment className="w-[66px] bg-[#7a0000]" />
          <Segment className="w-[39px] bg-[#000080]" />
          <Segment className="w-[16px] bg-[#800080]" />
        </div>
        <span className={`pl-[2px] pt-[1px] text-white ${small}`}>145959</span>
      </div>
    </div>
  );
}
